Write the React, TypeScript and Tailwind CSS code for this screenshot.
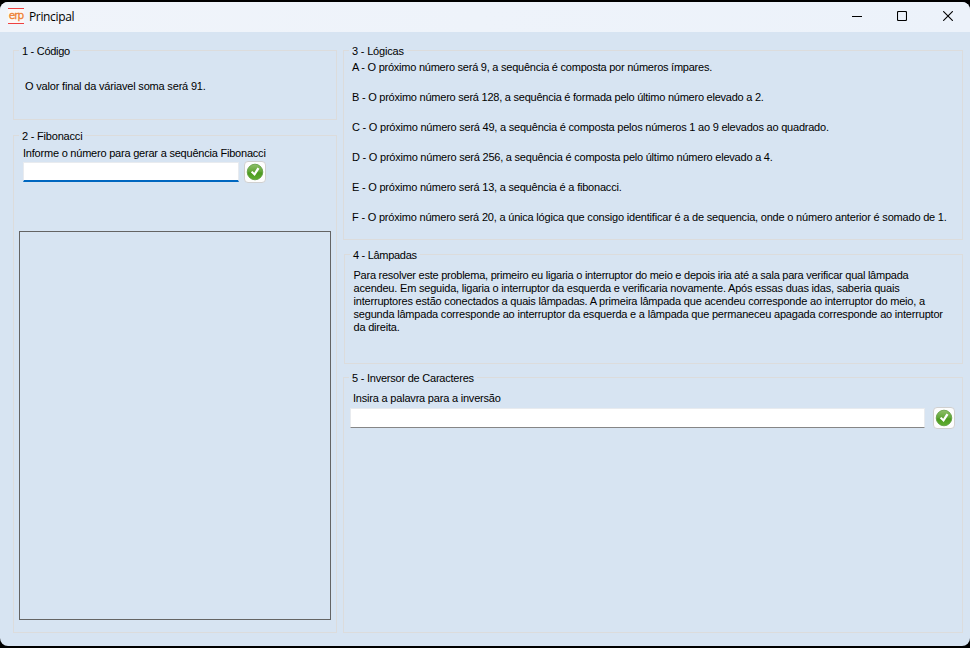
import React from 'react';

function Group({ title, titleClass, className, children }: { title: string; titleClass: string; className: string; children?: React.ReactNode }) {
  return (
    <section className={`border border-[#dcdcdc] ${className}`}>
      <h2 className={`-mt-[6px] ml-[5px] h-[13px] w-fit bg-[#d7e4f2] px-[3px] whitespace-nowrap ${titleClass}`}>{title}</h2>
      {children}
    </section>
  );
}

function CheckButton({ id }: { id: string }) {
  return (
    <button className="flex h-[22px] w-[22px] shrink-0 items-center justify-center rounded-[4px] border border-[#d0d0d0] bg-[#fdfdfd]">
      <svg width="18" height="18" viewBox="0 0 18 18">
        <defs>
          <linearGradient id={id} x1="0" y1="0" x2="0" y2="1">
            <stop offset="0" stopColor="#8fbf6a" />
            <stop offset="0.5" stopColor="#5fa535" />
            <stop offset="0.55" stopColor="#4c9a20" />
            <stop offset="1" stopColor="#5fae30" />
          </linearGradient>
        </defs>
        <circle cx="9" cy="9" r="7.8" fill={`url(#${id})`} stroke="#5c9a3c" strokeWidth="0.8" />
        <path d="M4.8 9.3 L6.5 8 L8.2 9.8 L11.5 4.6 L13.5 5.7 L8.7 13.1 Z" fill="#fff" />
      </svg>
    </button>
  );
}

const logic = [
  { text: 'A - O próximo número será 9, a sequência é composta por números ímpares.', tracking: 'tracking-[-0.24px]' },
  { text: 'B - O próximo número será 128, a sequência é formada pelo último número elevado a 2.', tracking: 'tracking-[-0.238px]' },
  { text: 'C - O próximo número será 49, a sequência é composta pelos números 1 ao 9 elevados ao quadrado.', tracking: 'tracking-[-0.221px]' },
  { text: 'D - O próximo número será 256, a sequência é composta pelo último número elevado a 4.', tracking: 'tracking-[-0.224px]' },
  { text: 'E - O próximo número será 13, a sequência é a fibonacci.', tracking: 'tracking-[-0.21px]' },
  { text: 'F - O próximo número será 20, a única lógica que consigo identificar é a de sequencia, onde o número anterior é somado de 1.', tracking: 'tracking-[-0.2px]' },
];

const lamps = [
  { text: 'Para resolver este problema, primeiro eu ligaria o interruptor do meio e depois iria até a sala para verificar qual lâmpada', tracking: 'tracking-[-0.246px]' },
  { text: 'acendeu. Em seguida, ligaria o interruptor da esquerda e verificaria novamente. Após essas duas idas, saberia quais', tracking: 'tracking-[-0.203px]' },
  { text: 'interruptores estão conectados a quais lâmpadas. A primeira lâmpada que acendeu corresponde ao interruptor do meio, a', tracking: 'tracking-[-0.196px]' },
  { text: 'segunda lâmpada corresponde ao interruptor da esquerda e a lâmpada que permaneceu apagada corresponde ao interruptor', tracking: 'tracking-[-0.197px]' },
  { text: 'da direita.', tracking: 'tracking-[-0.2px]' },
];

export default function App() {
  return (
    <div className="h-[648px] w-[970px] overflow-hidden bg-black pt-[2px] font-['Liberation_Sans',Arial,sans-serif] text-[11px] leading-[13px] text-black">
      <div className="flex h-[644px] flex-col overflow-hidden rounded-[8px] bg-[#d7e4f2]">
        <header className="flex h-[30px] shrink-0 items-center bg-linear-to-r from-[#f0f4fa] to-[#ecf2fa] pr-[17px] pb-[2px] pl-[8px]">
          <div className="flex h-[16px] w-[16px] items-center justify-center border-y border-[#ee4040] bg-[#fbf7f6]">
            <span className="-mt-[2px] font-['DejaVu_Sans',sans-serif] text-[10.5px] leading-[12px] tracking-[-1px] text-[#ee8133] [-webkit-text-stroke:0.3px_#ee8133]">erp</span>
          </div>
          <span className="ml-[5px] flex-1 font-['Open_Sans',sans-serif] text-[12px] tracking-[-0.35px]">Principal</span>
          <div className="flex items-center gap-[35px]">
            <svg width="10" height="10" viewBox="0 0 10 10"><path d="M0 5.5H10" stroke="#000" fill="none" /></svg>
            <svg width="10" height="10" viewBox="0 0 10 10"><rect x="0.5" y="0.5" width="9" height="9" rx="1" stroke="#000" fill="none" strokeWidth="1.1" /></svg>
            <svg className="ml-px" width="10" height="10" viewBox="0 0 10 10"><path d="M0.2 0.2L9.8 9.8M9.8 0.2L0.2 9.8" stroke="#000" fill="none" strokeWidth="1.1" /></svg>
          </div>
        </header>
        <main className="flex pt-[18px] pl-[13px]">
          <div className="w-[324px]">
            <Group title="1 - Código" titleClass="tracking-[-0.28px]" className="h-[70px]">
              <p className="mt-[22px] ml-[11px] tracking-[-0.18px]">O valor final da váriavel soma será 91.</p>
            </Group>
            <Group title="2 - Fibonacci" titleClass="tracking-[-0.2px]" className="mt-[15px] h-[498px]">
              <p className="mt-[4px] ml-[9px] tracking-[-0.215px]">Informe o número para gerar a sequência Fibonacci</p>
              <div className="mt-px ml-[9px] flex items-center gap-[5px]">
                <input className="h-[20px] w-[216px] border border-b-2 border-[#e8ebef] border-b-[#0067c0] bg-white outline-none" />
                <CheckButton id="fibonacci" />
              </div>
              <div className="mt-[48px] ml-[5px] h-[389px] w-[312px] border border-[#646464]" />
            </Group>
          </div>
          <div className="ml-[6px] w-[620px]">
            <Group title="3 - Lógicas" titleClass="tracking-[-0.18px]" className="h-[190px]">
              <div className="mt-[3px] ml-[8px] flex flex-col gap-[17px] whitespace-nowrap">
                {logic.map((l) => <p key={l.text} className={l.tracking}>{l.text}</p>)}
              </div>
            </Group>
            <Group title="4 - Lâmpadas" titleClass="tracking-[-0.3px]" className="mt-[14px] ml-px h-[110px]">
              <div className="mt-[7px] ml-[8.5px] whitespace-nowrap">
                {lamps.map((l) => <p key={l.text} className={l.tracking}>{l.text}</p>)}
              </div>
            </Group>
            <Group title="5 - Inversor de Caracteres" titleClass="tracking-[-0.23px]" className="mt-[13px] h-[256px]">
              <p className="mt-[7px] ml-[9px] tracking-[-0.2px]">Insira a palavra para a inversão</p>
              <div className="mt-[2px] ml-[6px] flex items-center gap-[8px]">
                <input className="h-[20px] w-[575px] border border-[#e8ebef] border-b-[#868686] bg-white outline-none" />
                <CheckButton id="inversor" />
              </div>
            </Group>
          </div>
        </main>
      </div>
    </div>
  );
}
